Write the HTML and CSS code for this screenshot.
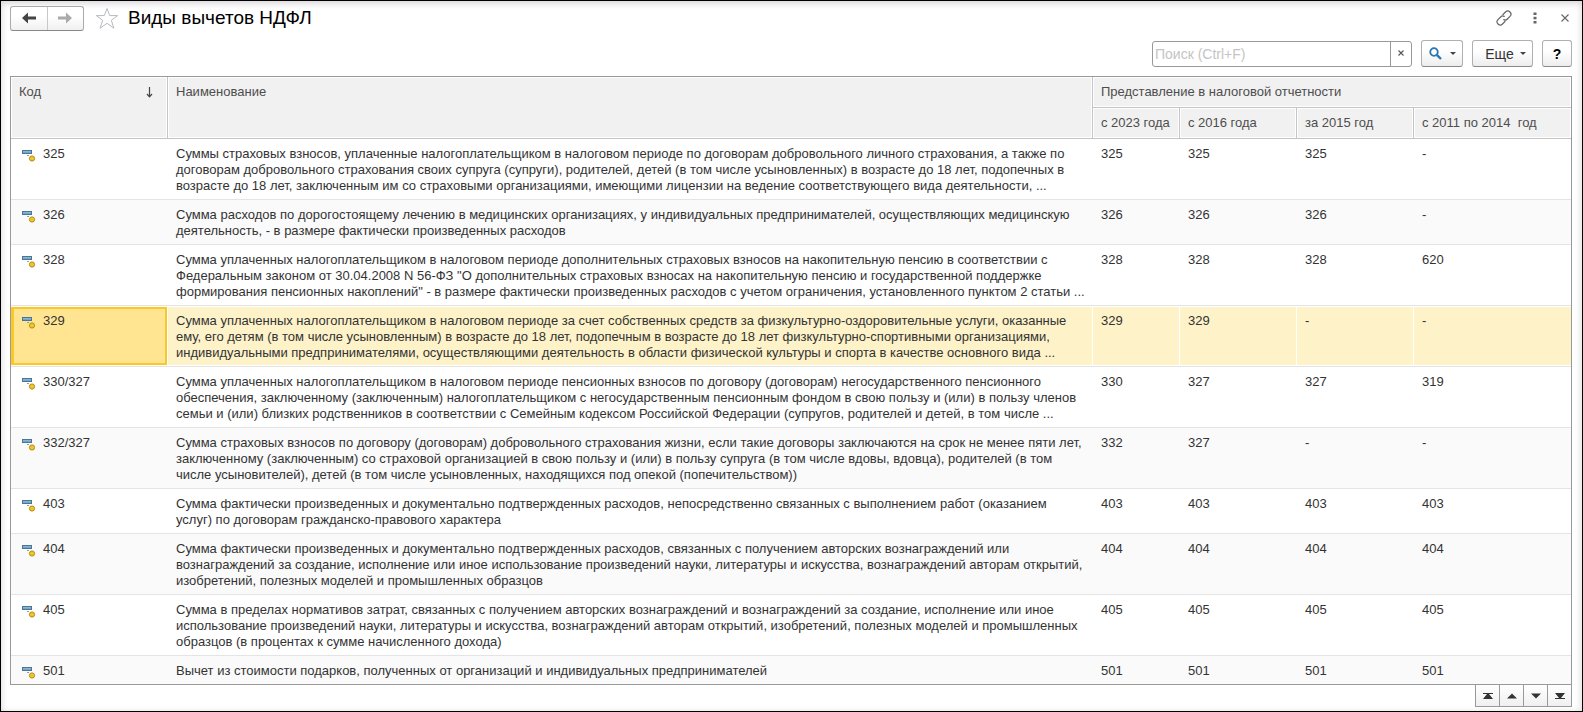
FILE: index.html
```html
<!DOCTYPE html>
<html lang="ru">
<head>
<meta charset="utf-8">
<title>Виды вычетов НДФЛ</title>
<link rel="stylesheet" href="styles.css">
</head>
<body>
<svg class="defs" aria-hidden="true">
  <defs>
    <linearGradient id="blue" x1="0" y1="0" x2="0" y2="1"><stop offset="0" stop-color="#9cc4e0"/><stop offset="1" stop-color="#5f96bd"/></linearGradient>
    <symbol id="item" viewBox="0 0 14 12">
      <rect x="0.5" y="0.5" width="9" height="3" fill="url(#blue)" stroke="#4b7595"/>
      <path d="M5 5.5H7" stroke="#999" fill="none"/>
      <circle cx="10" cy="8.500" r="2.600" fill="#f3c52c" stroke="#b08d14"/>
    </symbol>
  </defs>
</svg>
<main class="window">
  <header class="titlebar">
    <div class="history">
      <button type="button" aria-label="Назад"><svg width="14" height="12" viewBox="0 0 14 12"><path d="M0 6L6 0.5V4.5H14V7.5H6V11.5Z" fill="#444"/></svg></button>
      <button type="button" aria-label="Вперед"><svg width="14" height="12" viewBox="0 0 14 12"><path d="M14 6L8 0.5V4.5H0V7.5H8V11.5Z" fill="#aaa"/></svg></button>
    </div>
    <button type="button" class="plain" aria-label="В избранное"><svg width="24" height="23" viewBox="0 0 24 23"><path d="M12 1.5L14.7 8.6H22.6L16.3 13.3L18.9 21.2L12 16.3L5.1 21.2L7.7 13.3L1.4 8.6H9.3Z" fill="#fff" stroke="#b5bac1"/></svg></button>
    <h1>Виды вычетов НДФЛ</h1>
    <div class="tools">
      <button type="button" class="plain" aria-label="Ссылка"><svg width="16" height="16" viewBox="0 0 16 16" fill="none" stroke="#666" stroke-width="1.2" stroke-linecap="round"><path d="M7 4.500L9.500 2A3.100 3.100 0 0 1 14 6.400L11.400 9A3 3 0 0 1 7.800 9.600"/><path d="M9 11.500L6.500 14A3.100 3.100 0 0 1 2 9.600L4.600 7A3 3 0 0 1 8.200 6.400"/></svg></button>
      <button type="button" class="plain" aria-label="Меню"><svg width="4" height="12" viewBox="0 0 4 12" fill="#666"><rect x="0.5" y="0.500" width="3" height="2.500"/><rect x="0.5" y="4.800" width="3" height="2.500"/><rect x="0.5" y="9" width="3" height="2.500"/></svg></button>
      <button type="button" class="plain" aria-label="Закрыть"><svg width="8" height="8" viewBox="0 0 8 8"><path d="M0.500 0.500L7.500 7.500M7.500 0.500L0.500 7.500" stroke="#666" stroke-width="1.100"/></svg></button>
    </div>
  </header>

  <form class="commands">
    <div class="search">
      <input type="text" placeholder="Поиск (Ctrl+F)" aria-label="Поиск">
      <button type="button" aria-label="Очистить"><svg width="6" height="6" viewBox="0 0 6 6"><path d="M0.500 0.500L5.500 5.500M5.500 0.500L0.500 5.500" stroke="#555" stroke-width="1.100"/></svg></button>
    </div>
    <button type="button" class="btn find" aria-label="Найти"><svg width="13" height="13" viewBox="0 0 13 13" fill="none" stroke="#2b78b0"><circle cx="5" cy="5" r="3.800" stroke-width="1.800"/><path d="M7.800 7.800L12 12" stroke-width="2.400"/></svg><svg width="6" height="3" viewBox="0 0 6 3"><path d="M0 0H6L3 3Z" fill="#444"/></svg></button>
    <button type="button" class="btn more">Еще<svg width="6" height="3" viewBox="0 0 6 3"><path d="M0 0H6L3 3Z" fill="#444"/></svg></button>
    <button type="button" class="btn help">?</button>
  </form>

  <table class="list">
    <colgroup><col class="c-code"><col><col class="c-2023"><col class="c-year"><col class="c-year"><col class="c-2011"></colgroup>
    <thead>
      <tr><th rowspan="2"><div class="sorted">Код<svg width="7" height="11" viewBox="0 0 7 11"><path d="M3.500 0V9.500M1 7L3.500 9.800L6 7" fill="none" stroke="#444" stroke-width="1.200"/></svg></div></th><th rowspan="2">Наименование</th><th colspan="4">Представление в налоговой отчетности</th></tr>
      <tr><th>с 2023 года</th><th>с 2016 года</th><th>за 2015 год</th><th>с 2011 по 2014 &nbsp;год</th></tr>
    </thead>
    <tbody>
      <tr><td><div class="code"><svg class="item"><use href="#item"/></svg>325</div></td><td>Суммы страховых взносов, уплаченные налогоплательщиком в налоговом периоде по договорам добровольного личного страхования, а также по<br>договорам добровольного страхования своих супруга (супруги), родителей, детей (в том числе усыновленных) в возрасте до 18 лет, подопечных в<br>возрасте до 18 лет, заключенным им со страховыми организациями, имеющими лицензии на ведение соответствующего вида деятельности, ...</td><td>325</td><td>325</td><td>325</td><td>-</td></tr>
      <tr><td><div class="code"><svg class="item"><use href="#item"/></svg>326</div></td><td>Сумма расходов по дорогостоящему лечению в медицинских организациях, у индивидуальных предпринимателей, осуществляющих медицинскую<br>деятельность, - в размере фактически произведенных расходов</td><td>326</td><td>326</td><td>326</td><td>-</td></tr>
      <tr><td><div class="code"><svg class="item"><use href="#item"/></svg>328</div></td><td>Сумма уплаченных налогоплательщиком в налоговом периоде дополнительных страховых взносов на накопительную пенсию в соответствии с<br>Федеральным законом от 30.04.2008 N 56-ФЗ "О дополнительных страховых взносах на накопительную пенсию и государственной поддержке<br>формирования пенсионных накоплений" - в размере фактически произведенных расходов с учетом ограничения, установленного пунктом 2 статьи ...</td><td>328</td><td>328</td><td>328</td><td>620</td></tr>
      <tr class="selected"><td><div class="code"><svg class="item"><use href="#item"/></svg>329</div></td><td>Сумма уплаченных налогоплательщиком в налоговом периоде за счет собственных средств за физкультурно-оздоровительные услуги, оказанные<br>ему, его детям (в том числе усыновленным) в возрасте до 18 лет, подопечным в возрасте до 18 лет физкультурно-спортивными организациями,<br>индивидуальными предпринимателями, осуществляющими деятельность в области физической культуры и спорта в качестве основного вида ...</td><td>329</td><td>329</td><td>-</td><td>-</td></tr>
      <tr><td><div class="code"><svg class="item"><use href="#item"/></svg>330/327</div></td><td>Сумма уплаченных налогоплательщиком в налоговом периоде пенсионных взносов по договору (договорам) негосударственного пенсионного<br>обеспечения, заключенному (заключенным) налогоплательщиком с негосударственным пенсионным фондом в свою пользу и (или) в пользу членов<br>семьи и (или) близких родственников в соответствии с Семейным кодексом Российской Федерации (супругов, родителей и детей, в том числе ...</td><td>330</td><td>327</td><td>327</td><td>319</td></tr>
      <tr><td><div class="code"><svg class="item"><use href="#item"/></svg>332/327</div></td><td>Сумма страховых взносов по договору (договорам) добровольного страхования жизни, если такие договоры заключаются на срок не менее пяти лет,<br>заключенному (заключенным) со страховой организацией в свою пользу и (или) в пользу супруга (в том числе вдовы, вдовца), родителей (в том<br>числе усыновителей), детей (в том числе усыновленных, находящихся под опекой (попечительством))</td><td>332</td><td>327</td><td>-</td><td>-</td></tr>
      <tr><td><div class="code"><svg class="item"><use href="#item"/></svg>403</div></td><td>Сумма фактически произведенных и документально подтвержденных расходов, непосредственно связанных с выполнением работ (оказанием<br>услуг) по договорам гражданско-правового характера</td><td>403</td><td>403</td><td>403</td><td>403</td></tr>
      <tr><td><div class="code"><svg class="item"><use href="#item"/></svg>404</div></td><td>Сумма фактически произведенных и документально подтвержденных расходов, связанных с получением авторских вознаграждений или<br>вознаграждений за создание, исполнение или иное использование произведений науки, литературы и искусства, вознаграждений авторам открытий,<br>изобретений, полезных моделей и промышленных образцов</td><td>404</td><td>404</td><td>404</td><td>404</td></tr>
      <tr><td><div class="code"><svg class="item"><use href="#item"/></svg>405</div></td><td>Сумма в пределах нормативов затрат, связанных с получением авторских вознаграждений и вознаграждений за создание, исполнение или иное<br>использование произведений науки, литературы и искусства, вознаграждений авторам открытий, изобретений, полезных моделей и промышленных<br>образцов (в процентах к сумме начисленного дохода)</td><td>405</td><td>405</td><td>405</td><td>405</td></tr>
      <tr><td><div class="code"><svg class="item"><use href="#item"/></svg>501</div></td><td>Вычет из стоимости подарков, полученных от организаций и индивидуальных предпринимателей</td><td>501</td><td>501</td><td>501</td><td>501</td></tr>
    </tbody>
  </table>

  <nav class="pager">
    <button type="button" aria-label="В начало"><svg width="10" height="6" viewBox="0 0 10 6"><path d="M0 0H10V1H6L10 6H0L4 1H0Z" fill="#333"/></svg></button>
    <button type="button" aria-label="Вверх"><svg width="10" height="6" viewBox="0 0 10 6"><path d="M5 0.500L10 5.500H0Z" fill="#333"/></svg></button>
    <button type="button" aria-label="Вниз"><svg width="10" height="6" viewBox="0 0 10 6"><path d="M5 5.500L10 0.500H0Z" fill="#333"/></svg></button>
    <button type="button" aria-label="В конец"><svg width="10" height="6" viewBox="0 0 10 6"><path d="M0 6H10V5H6L10 0H0L4 5H0Z" fill="#333"/></svg></button>
  </nav>
</main>
</body>
</html>
```
FILE: styles.css
```css
* { box-sizing: border-box; }

body {
  margin: 0;
  font: 13px/16px "Liberation Sans", Arial, sans-serif;
  color: #333;
  background: #fff;
}

button, input { font: inherit; color: inherit; }

svg { display: block; flex: none; }

.defs { position: absolute; width: 0; height: 0; }

.window {
  min-height: 100vh;
  padding: 3px 10px 4px 9px;
  border: 1px solid #000;
  box-shadow: inset 0 2px 7px #d4d0d4;
}

.titlebar { display: flex; align-items: center; height: 28px; }

.history {
  display: flex;
  width: 74px;
  height: 25px;
  border: 1px solid #aaa;
  border-bottom-color: #888;
  border-radius: 3px;
  background: linear-gradient(#fff 40%, #f0f0f0);
}

.history button {
  flex: 1;
  display: flex;
  align-items: center;
  justify-content: center;
  padding: 0;
  border: 0;
  background: none;
}

.history button + button { border-left: 1px solid #c8c8c8; }

.plain { padding: 0; border: 0; background: none; }

.titlebar > .plain { margin-left: 11px; }

h1 {
  margin: 0 0 0 9px;
  font-size: 19px;
  line-height: 24px;
  font-weight: 400;
  color: #000;
}

.tools { display: flex; align-items: center; gap: 21px; margin-left: auto; padding-right: 3px; }

.tools .plain:last-child { margin-left: 3px; }

.commands { display: flex; justify-content: flex-end; gap: 9px; margin: 8px 0 9px; }

.search {
  display: flex;
  width: 260px;
  height: 26px;
  margin-top: 1px;
  border: 1px solid #999;
  border-radius: 3px;
  background: #fff;
}

.search input { flex: 1; min-width: 0; padding: 0 2px; border: 0; background: none; outline: 0; font-size: 14px; }

.search input::placeholder { color: #c4c4c4; opacity: 1; }

.search button {
  display: flex;
  align-items: center;
  justify-content: center;
  width: 21px;
  padding: 0 0 2px;
  border: 0;
  border-left: 1px solid #999;
  background: none;
}

.btn {
  display: flex;
  align-items: center;
  justify-content: center;
  height: 27px;
  padding: 0;
  border: 1px solid #b0b0b0;
  border-bottom-color: #888;
  border-radius: 3px;
  background: linear-gradient(#fff 40%, #ededed);
  color: #333;
  font-size: 14px;
}

.find { width: 42px; gap: 8px; }
.more { width: 61px; gap: 6px; padding-left: 6px; }
.help { width: 30px; font-weight: 700; color: #000; }

.list {
  width: 100%;
  table-layout: fixed;
  border: 1px solid #999;
  border-spacing: 0;
}

.c-code { width: 157px; }
.c-2023 { width: 87px; }
.c-year { width: 117px; }
.c-2011 { width: 157px; }

th {
  height: 31px;
  padding: 7px 7px 5px 8px;
  border-right: 1px solid #c4c4c4;
  border-bottom: 1px solid #c4c4c4;
  background: #f1f1f1;
  box-shadow: inset 0 0 0 1px #fff;
  font-weight: 400;
  text-align: left;
  vertical-align: top;
  white-space: nowrap;
  color: #4d4d4d;
}

.sorted { display: flex; justify-content: space-between; align-items: center; padding-right: 7px; }

thead th:last-child { border-right: 0; }

td {
  padding: 7px 7px 5px 8px;
  border-bottom: 1px solid #e4e4e4;
  vertical-align: top;
  white-space: nowrap;
}

tbody tr:nth-child(even) { background: #fafafa; }

tbody tr:last-child td { border-bottom: 0; }

.code { display: flex; gap: 7px; padding-left: 3px; }

.item { width: 14px; height: 12px; margin-top: 4px; }

tbody .selected td {
  background: #fdf2c8;
  box-shadow: inset -1px 0 #fff, inset 0 1px #fff, inset 0 -1px #fff;
}

tbody .selected td:last-child { box-shadow: inset 0 1px #fff, inset 0 -1px #fff; }

tbody .selected td:first-child {
  background: #ffe591;
  box-shadow: inset -1px 0 #fff, inset 0 1px #fff, inset 0 -1px #fff, inset 0 0 0 3px #fbc926;
}

.pager { display: flex; justify-content: flex-end; }

.pager button {
  display: flex;
  align-items: center;
  justify-content: center;
  width: 25px;
  height: 22px;
  margin-left: -1px;
  padding: 0;
  border: 1px solid #999;
  border-top: 0;
  background: linear-gradient(#fff, #f0f0f0);
}
```
